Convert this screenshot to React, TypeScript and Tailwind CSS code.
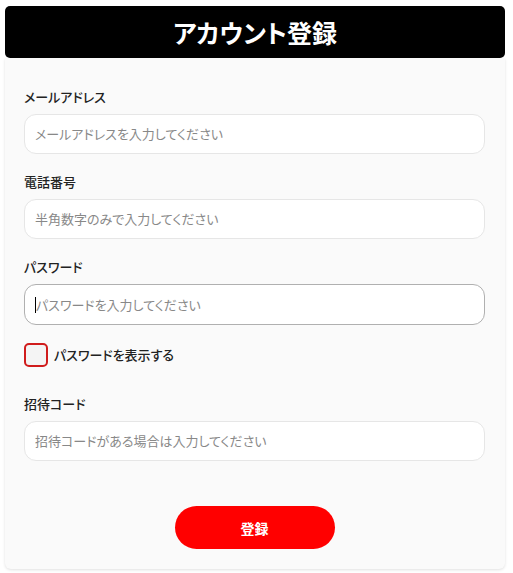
const FIELDS = [
  { label: 'メールアドレス', placeholder: 'メールアドレスを入力してください', type: 'email' },
  { label: '電話番号', placeholder: '半角数字のみで入力してください', type: 'tel' },
]

const jp = "font-['Noto_Sans_CJK_JP',sans-serif] [font-feature-settings:'palt']"

function Field({ label, placeholder, type, focused }: { label: string; placeholder: string; type: string; focused?: boolean }) {
  return (
    <div>
      <label className="block text-[13px] leading-5 font-medium text-[#222]">{label}</label>
      <div
        className={`mt-[7px] h-10 rounded-xl bg-white flex items-center px-[10px] border ${
          focused ? 'border-[#b0b0b0] h-[41px]' : 'border-[#e6e6e6]'
        }`}
      >
        {focused && <span className="w-px h-[16px] bg-black" />}
        <input
          type={type}
          placeholder={placeholder}
          className="flex-1 bg-transparent outline-none text-[13px] text-[#222] placeholder:text-[#888]"
        />
      </div>
    </div>
  )
}

export default function App() {
  return (
    <div className={`min-h-[573px] bg-white pl-[5px] pt-[6px] ${jp}`}>
      <div className="w-[500px]">
        {/* Header */}
        <div className="h-[52px] bg-black rounded-[5px] flex items-center justify-center">
          <h1 className="text-white text-[25px] font-bold leading-none">アカウント登録</h1>
        </div>

        <div className="bg-[#fafafa] rounded-b-[6px] shadow-[0_1px_3px_rgba(0,0,0,0.12)] pl-[19px] pr-[20px] pt-[29px] pb-5">
          <div className="flex flex-col gap-[18px]">
            {FIELDS.map((f) => (
              <Field key={f.label} {...f} />
            ))}
            <Field label="パスワード" placeholder="パスワードを入力してください" type="password" focused />
          </div>

          <label className="mt-[18px] flex items-center gap-[6px]">
            <span className="w-6 h-6 rounded-[5px] border-2 border-[#d01c1c] bg-[#f4f4f4]" />
            <span className="text-[13px] font-medium text-[#222]">パスワードを表示する</span>
          </label>

          <div className="mt-[27px]">
            <Field label="招待コード" placeholder="招待コードがある場合は入力してください" type="text" />
          </div>

          <div className="mt-[45px] flex justify-center">
            <button className="w-[160px] h-[43px] rounded-full bg-[#ff0000] text-white text-sm font-bold">
              登録
            </button>
          </div>
        </div>
      </div>
    </div>
  )
}
